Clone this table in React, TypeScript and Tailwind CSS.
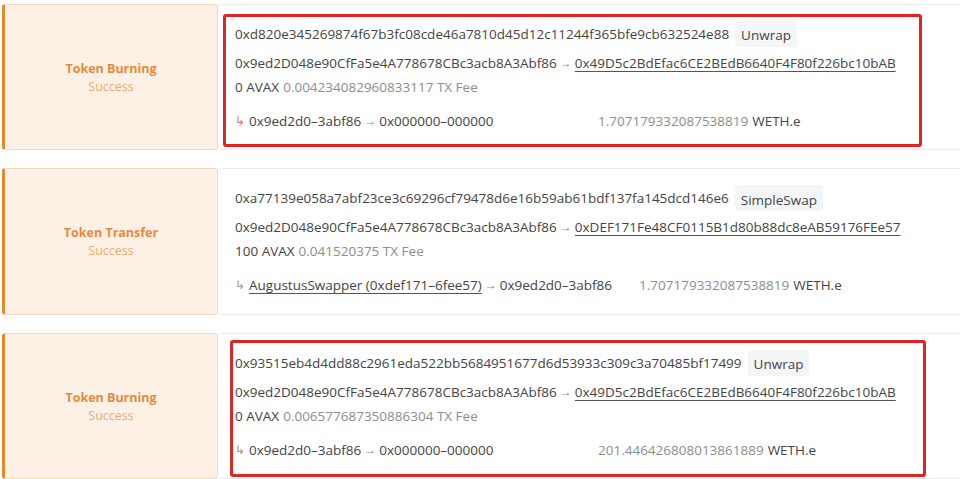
type Tx = {
  title: string;
  hash: string;
  method: string;
  from: string;
  to: string;
  value: string;
  fee: string;
  transferFrom: string;
  transferFromLink?: boolean;
  transferTo: string;
  amount: string;
  burn: boolean;
  highlight?: string;
};

const txs: Tx[] = [
  {
    title: 'Token Burning',
    hash: '0xd820e345269874f67b3fc08cde46a7810d45d12c11244f365bfe9cb632524e88',
    method: 'Unwrap',
    from: '0x9ed2D048e90CfFa5e4A778678CBc3acb8A3Abf86',
    to: '0x49D5c2BdEfac6CE2BEdB6640F4F80f226bc10bAB',
    value: '0 AVAX',
    fee: '0.004234082960833117',
    transferFrom: '0x9ed2d0–3abf86',
    transferTo: '0x000000–000000',
    amount: '1.707179332087538819',
    burn: true,
    highlight: 'left-[4px] top-[9px] w-[699px] h-[133px]',
  },
  {
    title: 'Token Transfer',
    hash: '0xa77139e058a7abf23ce3c69296cf79478d6e16b59ab61bdf137fa145dcd146e6',
    method: 'SimpleSwap',
    from: '0x9ed2D048e90CfFa5e4A778678CBc3acb8A3Abf86',
    to: '0xDEF171Fe48CF0115B1d80b88dc8eAB59176FEe57',
    value: '100 AVAX',
    fee: '0.041520375',
    transferFrom: 'AugustusSwapper (0xdef171–6fee57)',
    transferFromLink: true,
    transferTo: '0x9ed2d0–3abf86',
    amount: '1.707179332087538819',
    burn: false,
  },
  {
    title: 'Token Burning',
    hash: '0x93515eb4d4dd88c2961eda522bb5684951677d6d53933c309c3a70485bf17499',
    method: 'Unwrap',
    from: '0x9ed2D048e90CfFa5e4A778678CBc3acb8A3Abf86',
    to: '0x49D5c2BdEfac6CE2BEdB6640F4F80f226bc10bAB',
    value: '0 AVAX',
    fee: '0.006577687350886304',
    transferFrom: '0x9ed2d0–3abf86',
    transferTo: '0x000000–000000',
    amount: '201.446426808013861889',
    burn: true,
    highlight: 'left-[11px] top-[6px] w-[696px] h-[137px]',
  },
];

const TxRow = ({ tx }: { tx: Tx }) => (
  <div className="flex h-[147px]">
    <div className="flex w-[216px] shrink-0 flex-col items-center justify-center rounded-[3px] border border-l-[3px] border-[#f4d8bc] border-l-[#e8892c] bg-[#fdf1e6] pt-[2px]">
      <div className="text-[12.5px] font-bold leading-[18px] text-[#e8893a]">{tx.title}</div>
      <div className="text-[12.5px] leading-[18px] text-[#efab6c]">Success</div>
    </div>
    <div className="relative ml-[1px] flex-1 border-y border-[#ececec] bg-white pl-[16px] pt-[16px] text-[13.5px] text-[#444]">
      {tx.highlight && (
        <div className={`absolute rounded-[3px] border-[3px] border-[#e02424] ${tx.highlight}`} />
      )}
      <div className="flex h-[26px] items-center">
        <span>{tx.hash}</span>
        <span className="ml-[6px] flex h-[26px] items-center rounded-[4px] bg-[#f4f5f7] px-[6px] pt-[3px]">
          {tx.method}
        </span>
      </div>
      <div className="mt-[4px] flex h-[24px] items-center">
        <span>{tx.from}</span>
        <span className="mx-[3px] text-[12px] text-[#888]">→</span>
        <span className="underline decoration-[#555] underline-offset-[3px]">{tx.to}</span>
      </div>
      <div className="flex h-[24px] items-center">
        <span>{tx.value}</span>
        <span className="ml-[4px] text-[#8d8d8d]">{tx.fee} TX Fee</span>
      </div>
      <div className="mt-[10px] flex h-[24px] items-center">
        <div className="flex min-w-[336px] items-center">
          <span className={`mr-[4px] text-[12px] ${tx.burn ? 'text-[#e0707a]' : 'text-[#999]'}`}>↳</span>
          <span className={tx.transferFromLink ? 'underline decoration-[#555] underline-offset-[3px]' : ''}>
            {tx.transferFrom}
          </span>
          <span className="mx-[3px] text-[12px] text-[#888]">→</span>
          <span>{tx.transferTo}</span>
        </div>
        <div className="ml-[27px]">
          <span className="text-[#8d8d8d]">{tx.amount}</span>
          <span className="ml-[4px]">WETH.e</span>
        </div>
      </div>
    </div>
  </div>
);

export default function App() {
  return (
    <div
      className="flex h-[479px] w-[960px] flex-col gap-[18px] overflow-hidden bg-white pl-[2px] pt-[4px]"
      style={{ fontFamily: '"Open Sans", "Noto Sans", sans-serif' }}
    >
      {txs.map(tx => (
        <TxRow key={tx.hash} tx={tx} />
      ))}
    </div>
  );
}
